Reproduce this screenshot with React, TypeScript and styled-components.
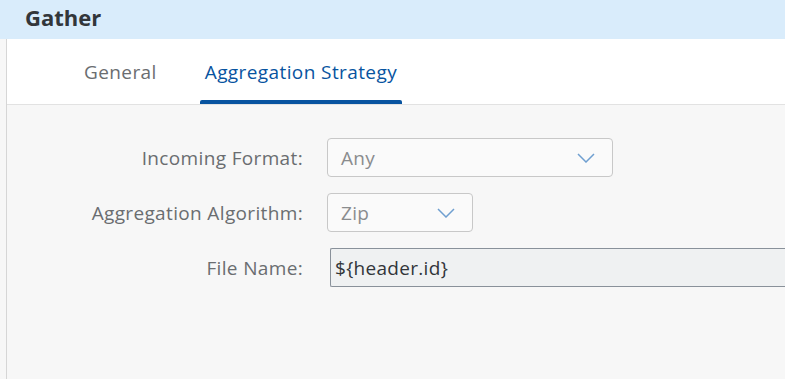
import React from 'react'
import styled, { createGlobalStyle } from 'styled-components'

const GlobalStyle = createGlobalStyle`
  html, body {
    margin: 0;
    padding: 0;
    background: #f7f7f7;
    font-family: "Open Sans", "Liberation Sans", Arial, sans-serif;
  }
`

const Chevron = () => (
  <svg width="18" height="10" viewBox="0 0 18 10">
    <path d="M1 1 L9 9 L17 1" fill="none" stroke="#6f9fd0" strokeWidth="1.5" />
  </svg>
)

export default function App() {
  return (
    <>
      <GlobalStyle />
      <Page>
        <Header>
          <Title>Gather</Title>
        </Header>
        <Body>
          <TabBar>
            <Tab>General</Tab>
            <Tab $active>Aggregation Strategy</Tab>
          </TabBar>
          <Form>
            <Row>
              <Label>Incoming Format:</Label>
              <Select $width={286}>
                <SelectValue>Any</SelectValue>
                <Chevron />
              </Select>
            </Row>
            <Row>
              <Label>Aggregation Algorithm:</Label>
              <Select $width={146}>
                <SelectValue>Zip</SelectValue>
                <Chevron />
              </Select>
            </Row>
            <Row>
              <Label>File Name:</Label>
              <TextField>{'${header.id}'}</TextField>
            </Row>
          </Form>
        </Body>
      </Page>
    </>
  )
}

const Page = styled.div`
  width: 785px;
  height: 379px;
  display: flex;
  flex-direction: column;
  overflow: hidden;
`
const Header = styled.div`
  height: 39px;
  background: #d9ecfb;
  display: flex;
  align-items: center;
  padding: 0 0 5px 25px;
  box-sizing: border-box;
  flex-shrink: 0;
`
const Title = styled.h1`
  margin: 0;
  font-size: 22px;
  font-weight: 700;
  color: #32363a;
`
const Body = styled.div`
  flex: 1;
  margin-left: 6px;
  border-left: 1px solid #d6d6d6;
  display: flex;
  flex-direction: column;
`
const TabBar = styled.div`
  height: 66px;
  background: #fff;
  border-bottom: 1px solid #e2e2e2;
  display: flex;
  padding-left: 72px;
  gap: 38px;
  box-sizing: border-box;
`
const Tab = styled.div<{ $active?: boolean }>`
  position: relative;
  display: flex;
  align-items: center;
  padding: 0 5px;
  font-size: 19px;
  letter-spacing: 0.4px;
  color: ${p => (p.$active ? '#0854a0' : '#6a6d70')};
  ${p => p.$active && `
    &::after {
      content: '';
      position: absolute;
      left: 0;
      right: 0;
      bottom: 0;
      height: 4px;
      background: #0854a0;
      border-radius: 2px 2px 0 0;
    }
  `}
`
const Form = styled.div`
  display: flex;
  flex-direction: column;
  padding-top: 33px;
  gap: 16px;
`
const Row = styled.div`
  display: flex;
  align-items: center;
`
const Label = styled.div`
  width: 320px;
  text-align: right;
  font-size: 19px;
  letter-spacing: 0.35px;
  color: #6a6d70;
  padding-right: 24px;
  box-sizing: border-box;
`
const Select = styled.div<{ $width: number }>`
  width: ${p => p.$width}px;
  height: 39px;
  box-sizing: border-box;
  border: 1px solid #c8c8c8;
  border-radius: 4px;
  background: #fafafa;
  display: flex;
  align-items: center;
  justify-content: space-between;
  padding: 0 17px 0 13px;
`
const SelectValue = styled.span`
  font-size: 19px;
  letter-spacing: 0.3px;
  color: #8a8c8e;
`
const TextField = styled.div`
  flex: 1;
  height: 39px;
  margin-left: 3px;
  box-sizing: border-box;
  border: 1px solid #89919a;
  border-right: none;
  border-radius: 2px 0 0 2px;
  background: #eff1f2;
  display: flex;
  align-items: center;
  padding-left: 4px;
  font-size: 19px;
  letter-spacing: 0.3px;
  color: #32363a;
`
